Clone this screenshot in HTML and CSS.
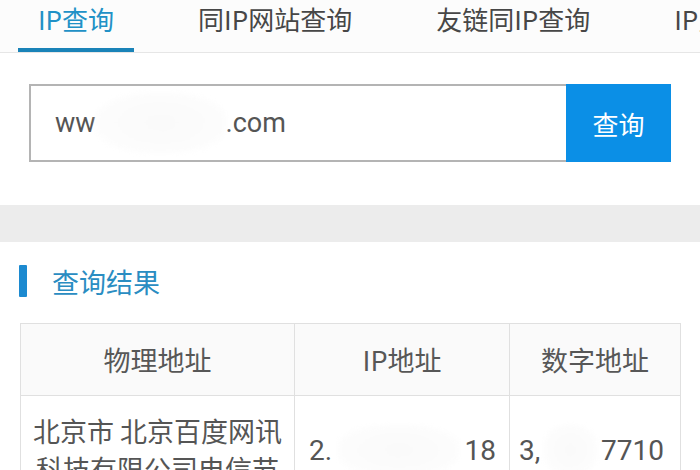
FILE: index.html
```html
<!DOCTYPE html>
<html lang="zh-CN">
<head>
<meta charset="utf-8">
<title>IP查询</title>
<link rel="stylesheet" href="styles.css">
</head>
<body>
<nav class="tabs">
  <div class="tab active">IP查询</div>
  <div class="tab">同IP网站查询</div>
  <div class="tab">友链同IP查询</div>
  <div class="tab">IP反查域名</div>
</nav>

<form class="search">
  <div class="input"><span>ww</span><span class="blob blob-input"></span><span>.com</span></div>
  <div class="btn">查询</div>
</form>

<div class="band"></div>

<section class="result">
  <h2 class="title"><span class="bar"></span>查询结果</h2>
  <table class="grid">
    <colgroup>
      <col class="c1"><col class="c2"><col class="c3">
    </colgroup>
    <thead>
      <tr><th>物理地址</th><th>IP地址</th><th>数字地址</th></tr>
    </thead>
    <tbody>
      <tr>
        <td class="addr">北京市 北京百度网讯科技有限公司电信节</td>
        <td class="num"><div class="split"><span>2.</span><span class="blob blob-ip"></span><span>18</span></div></td>
        <td class="num"><div class="split"><span>3,</span><span class="blob blob-dec"></span><span>7710</span></div></td>
      </tr>
    </tbody>
  </table>
</section>
</body>
</html>
```
FILE: styles.css
```css
* { box-sizing: border-box; }
html, body { margin: 0; padding: 0; }
body {
  width: 700px;
  height: 470px;
  overflow: hidden;
  background: #fff;
  font-family: "Noto Sans CJK SC", "Noto Sans", sans-serif;
  color: #555;
}

.tabs {
  display: flex;
  gap: 44px;
  height: 53px;
  padding-left: 18px;
  border-bottom: 1px solid #e6e6e6;
  background: #fcfcfc;
  white-space: nowrap;
  overflow: hidden;
}
.tab {
  flex: none;
  height: 52px;
  padding: 0 20px;
  font-size: 26px;
  line-height: 38px;
  color: #474747;
  border-bottom: 4px solid transparent;
}
.tab.active {
  color: #2191c6;
  border-bottom-color: #1a83b8;
}

.search {
  display: flex;
  margin: 31px 29px 0 29px;
  height: 78px;
}
.input {
  flex: 1;
  display: flex;
  align-items: center;
  border: 2px solid #b4b4b4;
  border-right: none;
  padding-left: 24px;
  font-family: Roboto, "Noto Sans CJK SC", sans-serif;
  font-size: 27px;
  color: #555;
}
.btn {
  width: 105px;
  background: #0b8fe6;
  color: #fff;
  font-size: 26px;
  display: flex;
  align-items: center;
  justify-content: center;
}

.blob {
  display: inline-block;
  border-radius: 40%;
  background: radial-gradient(ellipse at center, #fafafa 0%, #fcfcfc 60%, #ffffff 100%);
  filter: blur(2px);
}
.blob-input { width: 130px; height: 60px; }
.blob-ip { flex: 1; height: 50px; margin: 0 6px; }
.blob-dec { flex: 1; height: 50px; margin: 0 4px; }

.band {
  margin-top: 43px;
  height: 37px;
  background: #ececec;
}

.result {
  padding: 23px 20px 0 19px;
}
.title {
  display: flex;
  align-items: center;
  gap: 25px;
  margin: 0;
  height: 32px;
  font-size: 27px;
  font-weight: normal;
  color: #2a8dc2;
}
.bar {
  width: 8px;
  height: 32px;
  background: #1c8ad0;
  border-radius: 1px;
}

.grid {
  margin: 26px 0 0 1px;
  width: 660px;
  table-layout: fixed;
  border-collapse: collapse;
  font-size: 27px;
  color: #555;
}
.c1 { width: 274px; }
.c2 { width: 215px; }
.c3 { width: 171px; }
.grid th, .grid td {
  border: 1px solid #e0e0e0;
  text-align: center;
  vertical-align: middle;
}
.grid th {
  height: 72px;
  font-weight: normal;
  background: #fafafa;
  color: #575757;
}
.grid td.addr {
  padding: 16px 8px;
  line-height: 38px;
}
.grid td.num {
  padding: 0 13px 0 14px;
  font-family: Roboto, "Noto Sans CJK SC", sans-serif;
  font-size: 28px;
}
.grid td.num + td.num { padding: 0 16px 0 9px; }
.split {
  display: flex;
  align-items: center;
}
```
